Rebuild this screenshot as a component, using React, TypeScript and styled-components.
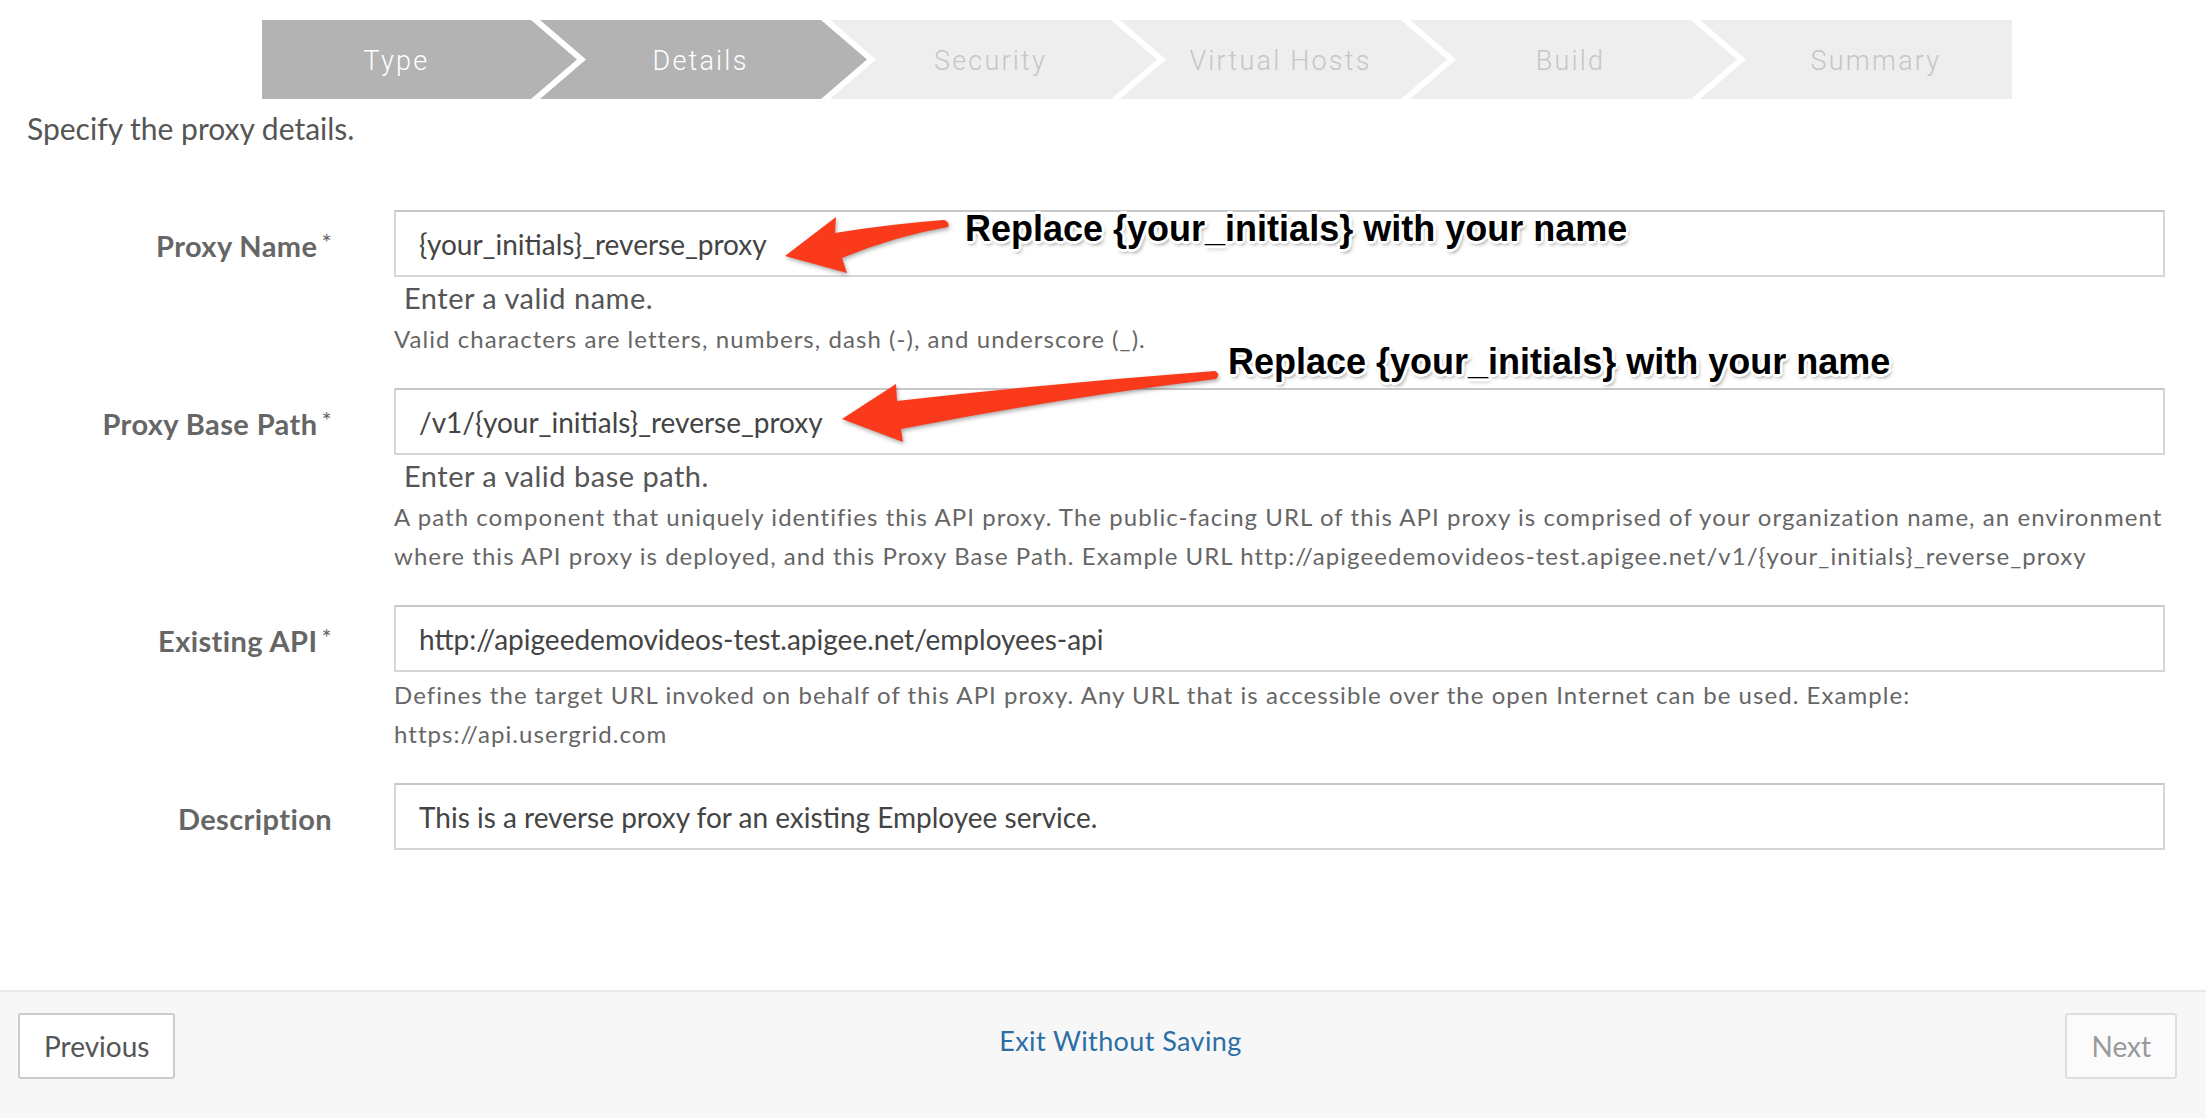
import React from "react";
import styled, { createGlobalStyle } from "styled-components";

const Global = createGlobalStyle`
  html, body { margin: 0; padding: 0; background: #ffffff; }
  body { font-family: Lato, "Open Sans", sans-serif; color: #555; }
  * { box-sizing: border-box; }
`;

const Page = styled.div`
  position: relative;
  width: 2206px;
  height: 1118px;
  display: flex;
  flex-direction: column;
  overflow: hidden;
`;

const Main = styled.main`
  flex: 1;
  padding: 20px 41px 0 0;
`;

const Stepper = styled.nav`
  display: flex;
  margin-left: 262px;
  width: 1750px;
  height: 79px;
`;

type StepKind = "first" | "middle" | "last";

const clipFor = (k: StepKind) =>
  k === "first"
    ? "polygon(0 0, calc(100% - 46px) 0, 100% 50%, calc(100% - 46px) 100%, 0 100%)"
    : k === "last"
    ? "polygon(0 0, 100% 0, 100% 100%, 0 100%, 46px 50%)"
    : "polygon(0 0, calc(100% - 46px) 0, 100% 50%, calc(100% - 46px) 100%, 0 100%, 46px 50%)";

const Step = styled.div<{ $kind: StepKind; $active: boolean; $w: number }>`
  flex: 0 0 ${(p) => p.$w}px;
  height: 100%;
  margin-left: ${(p) => (p.$kind === "first" ? 0 : -37)}px;
  padding-left: ${(p) => (p.$kind === "first" ? 0 : 40)}px;
  padding-right: ${(p) => (p.$kind === "last" ? 0 : 46)}px;
  clip-path: ${(p) => clipFor(p.$kind)};
  background: ${(p) => (p.$active ? "#b3b3b3" : "#eeeeee")};
  color: ${(p) => (p.$active ? "#ffffff" : "#c6c6c6")};
  display: flex;
  align-items: center;
  justify-content: center;
  padding-top: 2px;
  font-family: Roboto, "Liberation Sans", sans-serif;
  font-weight: 300;
  font-size: 27px;
  letter-spacing: 2.2px;
`;

const Intro = styled.p`
  margin: 10px 0 0 27px;
  font-size: 30px;
  line-height: 38px;
  color: #555;
`;

const Form = styled.div`
  margin-top: 63px;
  display: flex;
  flex-direction: column;
  gap: 30px;
`;

const Row = styled.div`
  display: grid;
  grid-template-columns: 340px 1fr;
  column-gap: 54px;
  align-items: start;
`;

const Label = styled.label`
  height: 67px;
  padding-top: 4px;
  display: flex;
  align-items: center;
  justify-content: flex-end;
  font-weight: 700;
  font-size: 29px;
  letter-spacing: 0.4px;
  color: #666;
  padding-right: 8px;
`;

const Req = styled.sup`
  font-weight: 400;
  font-size: 24px;
  margin-left: 4px;
  position: relative;
  top: -4px;
`;

const Control = styled.div`
  display: flex;
  flex-direction: column;
`;

const Input = styled.div`
  height: 67px;
  border: 2px solid #d6d6d6;
  border-top-color: #c8c8c8;
  background: #fff;
  display: flex;
  align-items: center;
  padding-left: 23px;
  font-size: 28px;
  color: #444;
`;

const Validation = styled.div`
  padding-left: 10px;
  font-size: 29px;
  line-height: 42px;
  color: #555;
  letter-spacing: 0.5px;
`;

const Help = styled.div<{ $tight?: boolean }>`
  margin-top: ${(p) => (p.$tight ? 3 : 0)}px;
  font-size: 24px;
  line-height: 39px;
  color: #666;
  letter-spacing: 1.05px;
`;

const Footer = styled.footer`
  flex: 0 0 128px;
  background: #f7f7f7;
  border-top: 2px solid #e8e8e8;
  display: flex;
  justify-content: space-between;
  align-items: flex-start;
  padding: 21px 29px 0 18px;
`;

const Button = styled.button<{ $disabled?: boolean }>`
  height: 66px;
  padding: 0 24px;
  border: 2px solid ${(p) => (p.$disabled ? "#dedede" : "#cccccc")};
  border-radius: 3px;
  background: ${(p) => (p.$disabled ? "#fbfbfb" : "#ffffff")};
  color: ${(p) => (p.$disabled ? "#999" : "#555")};
  font-family: Lato, sans-serif;
  font-size: 28px;
`;

const ExitLink = styled.a`
  margin-top: 11px;
  font-size: 27px;
  color: #2b6ea6;
  text-decoration: none;
  letter-spacing: 0.4px;
`;

const Overlay = styled.svg`
  position: absolute;
  left: 0;
  top: 0;
  width: 2206px;
  height: 1118px;
  pointer-events: none;
  filter: drop-shadow(1px 2px 2px rgba(0, 0, 0, 0.35));
`;

const Callout = styled.div<{ $x: number; $y: number }>`
  position: absolute;
  left: ${(p) => p.$x}px;
  top: ${(p) => p.$y}px;
  font-family: "Liberation Sans", Arial, sans-serif;
  font-weight: 700;
  font-size: 36px;
  line-height: 36px;
  color: #000;
  white-space: nowrap;
  text-shadow: -2px -2px 0 #fff, 2px -2px 0 #fff, -2px 2px 0 #fff, 2px 2px 0 #fff,
    0 -3px 0 #fff, 0 3px 0 #fff, -3px 0 0 #fff, 3px 0 0 #fff,
    2px 3px 4px rgba(0, 0, 0, 0.55);
`;

const steps: { name: string; w: number; kind: StepKind; active: boolean }[] = [
  { name: "Type", w: 315, kind: "first", active: true },
  { name: "Details", w: 327, kind: "middle", active: true },
  { name: "Security", w: 327, kind: "middle", active: false },
  { name: "Virtual Hosts", w: 327, kind: "middle", active: false },
  { name: "Build", w: 327, kind: "middle", active: false },
  { name: "Summary", w: 312, kind: "last", active: false },
];

export default function App() {
  return (
    <>
      <Global />
      <Page>
        <Main>
          <Stepper>
            {steps.map((s) => (
              <Step key={s.name} $kind={s.kind} $active={s.active} $w={s.w}>
                {s.name}
              </Step>
            ))}
          </Stepper>
          <Intro>Specify the proxy details.</Intro>
          <Form>
            <Row>
              <Label>
                Proxy Name<Req>*</Req>
              </Label>
              <Control>
                <Input>{"{your_initials}_reverse_proxy"}</Input>
                <Validation>Enter a valid name.</Validation>
                <Help>Valid characters are letters, numbers, dash (-), and underscore (_).</Help>
              </Control>
            </Row>
            <Row>
              <Label>
                Proxy Base Path<Req>*</Req>
              </Label>
              <Control>
                <Input>{"/v1/{your_initials}_reverse_proxy"}</Input>
                <Validation>Enter a valid base path.</Validation>
                <Help>
                  A path component that uniquely identifies this API proxy. The public-facing URL of this API proxy is
                  comprised of your organization name, an environment where this API proxy is deployed, and this Proxy
                  Base Path. Example URL http://apigeedemovideos-test.apigee.net/v1/{"{your_initials}"}_reverse_proxy
                </Help>
              </Control>
            </Row>
            <Row>
              <Label>
                Existing API<Req>*</Req>
              </Label>
              <Control>
                <Input>http://apigeedemovideos-test.apigee.net/employees-api</Input>
                <Help $tight>
                  Defines the target URL invoked on behalf of this API proxy. Any URL that is accessible over the open
                  Internet can be used. Example: https://api.usergrid.com
                </Help>
              </Control>
            </Row>
            <Row>
              <Label>Description</Label>
              <Control>
                <Input>This is a reverse proxy for an existing Employee service.</Input>
              </Control>
            </Row>
          </Form>
        </Main>
        <Footer>
          <Button>Previous</Button>
          <ExitLink href="#">Exit Without Saving</ExitLink>
          <Button $disabled>Next</Button>
        </Footer>
        <Overlay viewBox="0 0 2206 1118">
          <path
            fill="#fb3a1c"
            d="M785 256 L836 217 L835 233 Q890 224 944 220 Q950 222 948 227 Q895 236 842 258 L847 273 Z"
          />
          <path
            fill="#fb3a1c"
            d="M842 419 L896 384 L897 401 Q1055 383 1215 371 Q1221 374 1216 379 Q1060 398 901 429 L903 442 Z"
          />
        </Overlay>
        <Callout $x={965} $y={211}>Replace {"{your_initials}"} with your name</Callout>
        <Callout $x={1228} $y={344}>Replace {"{your_initials}"} with your name</Callout>
      </Page>
    </>
  );
}
